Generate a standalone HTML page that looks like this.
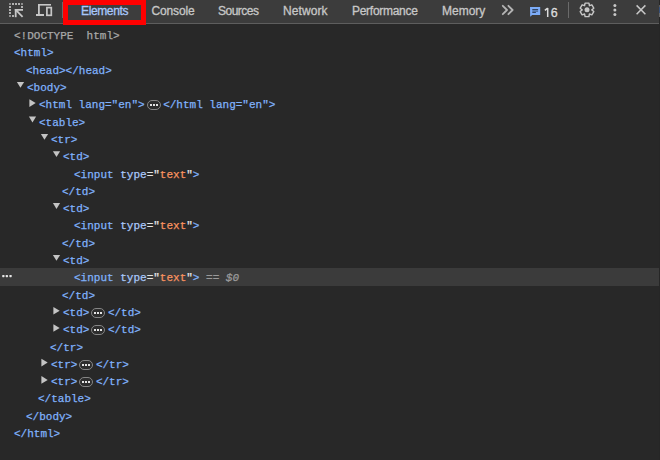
<!DOCTYPE html>
<html><head><meta charset="utf-8">
<style>
*{margin:0;padding:0;box-sizing:border-box}
html,body{width:660px;height:460px;overflow:hidden;background:#282828}
body{position:relative;font-family:"Liberation Sans",sans-serif}
#tb{position:absolute;left:0;top:0;width:659px;height:24px;background:#3c3c3c;border-bottom:1px solid #5e5e5e}
.tab{position:absolute;top:1px;height:23px;line-height:21px;font-size:12px;color:#c7c7c7;white-space:nowrap;-webkit-text-stroke:0.3px currentColor}
.sep{position:absolute;top:2px;width:1px;height:16px;background:#6a6a6a}
#sel{position:absolute;left:63px;top:-0.5px;width:83px;height:25px;border:5px solid #ff0000;background:#3d3d3d}
svg{position:absolute;overflow:visible}
#code{position:absolute;left:0;top:0;font-family:"Liberation Mono",monospace;font-size:11px;color:#e3e3e3;-webkit-text-stroke:0.25px currentColor}
.r{position:absolute;left:0;height:17.3px;line-height:17.3px;white-space:pre}
.t{color:#80b2fc}
.an{color:#a8c7fa}
.av{color:#fa9360}
.q{color:#e3e3e3}
.eq{color:#9a9a9a}
.dt{color:#a8a8a8}
.tri{position:absolute;width:0;height:0}
.dn{border-left:3.6px solid transparent;border-right:3.6px solid transparent;border-top:6px solid #c4c4c4}
.rt{border-top:3.8px solid transparent;border-bottom:3.8px solid transparent;border-left:6px solid #c4c4c4}
.sp{display:inline-block;width:18.5px}

#hl{position:absolute;left:0;top:268px;width:659px;height:18px;background:#3b3b3b}
</style></head><body>
<div id="tb">
</div>
<div id="sel"></div>
<div style="position:absolute;left:659px;top:0;width:1px;height:460px;background:#262626"></div><div style="position:absolute;left:659px;top:5px;width:1px;height:2px;background:#5a5a5a"></div><div style="position:absolute;left:659px;top:7px;width:1px;height:6px;background:#36507a"></div><div style="position:absolute;left:659px;top:13px;width:1px;height:4px;background:#686868"></div>
<div class="tab" style="left:81px;color:#a8c7fa;letter-spacing:-0.37px">Elements</div>
<div class="tab" style="left:151.5px;letter-spacing:-0.15px">Console</div>
<div class="tab" style="left:218px;letter-spacing:-0.5px">Sources</div>
<div class="tab" style="left:283px;letter-spacing:0.1px">Network</div>
<div class="tab" style="left:352px;letter-spacing:-0.28px">Performance</div>
<div class="tab" style="left:442px">Memory</div>
<svg width="660" height="24" style="left:0;top:0" viewBox="0 0 660 24">
<g fill="#c7c7c7">
<g fill="#b0b0b0"><rect x="12" y="3" width="2" height="2"/><rect x="15" y="3" width="2" height="2"/><rect x="18" y="3" width="2" height="2"/>
<rect x="9" y="6" width="2" height="2"/><rect x="9" y="9" width="2" height="2"/><rect x="9" y="12" width="2" height="2"/>
<rect x="21" y="6" width="2" height="2"/><rect x="12" y="15" width="2" height="2"/></g>
<g fill="#8c8c8c"><rect x="9" y="3" width="2" height="2"/><rect x="21" y="3" width="2" height="2"/><rect x="9" y="15" width="2" height="2"/></g>
<rect x="14.8" y="9" width="8.2" height="1.8"/><rect x="14.8" y="9" width="1.8" height="8.2"/>
<rect x="38" y="4" width="13" height="1.6"/><rect x="38" y="4" width="1.8" height="11"/><rect x="36" y="14" width="8" height="2"/>
<circle cx="614.9" cy="5.45" r="1.5"/><circle cx="614.9" cy="10" r="1.5"/><circle cx="614.9" cy="14.55" r="1.5"/>
<circle cx="587" cy="9.85" r="2.5"/>
</g>
<g fill="none" stroke="#c7c7c7">
<path d="M16,10.2 L22.6,16.8" stroke-width="1.8"/>
<rect x="46.9" y="7.6" width="4.4" height="7.7" stroke-width="1.7"/>
<path d="M502.8,5.8 L507,10 L502.8,14.2 M508.4,5.8 L512.6,10 L508.4,14.2" stroke="#b4b4b4" stroke-width="1.8" stroke-linecap="round" stroke-linejoin="round"/>
<path d="M636.6,5.4 L645.4,14.2 M645.4,5.4 L636.6,14.2" stroke-width="1.5"/>
<path d="M584.60,5.69 L585.07,3.12 L588.93,3.12 L589.40,5.69 L589.40,5.69 L591.86,4.81 L593.79,8.16 L591.80,9.85 L591.80,9.85 L593.79,11.54 L591.86,14.89 L589.40,14.01 L589.40,14.01 L588.93,16.58 L585.07,16.58 L584.60,14.01 L584.60,14.01 L582.14,14.89 L580.21,11.54 L582.20,9.85 L582.20,9.85 L580.21,8.16 L582.14,4.81 L584.60,5.69Z" stroke-width="1.4" stroke-linejoin="round"/>
</g>
<path d="M530,7 H540.2 V15.1 H532.2 L530.2,16.8 Z" fill="#7cacf8"/>
<g fill="#2a3a55"><rect x="532.3" y="9" width="5.8" height="0.9"/><rect x="532.3" y="10.6" width="5.8" height="0.9"/><rect x="532.3" y="12.1" width="3.6" height="0.9"/></g>
</svg>
<svg width="10" height="14" style="left:542px;top:5px" viewBox="542 5 10 14"><path d="M547.7,8 V17 M544.9,10.4 L547.7,8.2" stroke="#dcdcdc" stroke-width="1.5" fill="none"/></svg><div class="tab" style="left:550.7px;top:3px;color:#dcdcdc;font-size:12.5px">6</div>
<div class="sep" style="left:62px"></div>
<div class="sep" style="left:568px"></div>
<div id="hl"></div>
<svg width="20" height="10" style="left:0;top:271px" viewBox="0 271 20 10"><g fill="#e6e6e6"><rect x="2.2" y="274.9" width="2.3" height="2.3" rx="0.6"/><rect x="5.7" y="274.9" width="2.3" height="2.3" rx="0.6"/><rect x="9.4" y="274.9" width="2.3" height="2.3" rx="0.6"/></g></svg>
<div id="code">
<div class="r" style="top:28.10px;left:14.00px"><span class="dt">&lt;!DOCTYPE  html&gt;</span></div>
<div class="r" style="top:45.40px;left:14.00px"><span class="t">&lt;html&gt;</span></div>
<div class="r" style="top:62.70px;left:26.00px"><span class="t">&lt;head&gt;&lt;/head&gt;</span></div>
<div class="r" style="top:80.00px;left:27.00px"><span class="t">&lt;body&gt;</span></div>
<div class="r" style="top:97.30px;left:39.00px"><span class="t">&lt;html lang="en"&gt;</span><span class="sp"></span><span class="t">&lt;/html lang="en"&gt;</span></div>
<div class="r" style="top:114.60px;left:39.00px"><span class="t">&lt;table&gt;</span></div>
<div class="r" style="top:131.90px;left:51.00px"><span class="t">&lt;tr&gt;</span></div>
<div class="r" style="top:149.20px;left:63.00px"><span class="t">&lt;td&gt;</span></div>
<div class="r" style="top:166.50px;left:74.00px"><span class="t">&lt;input </span><span class="an">type</span><span class="q">="</span><span class="av">text</span><span class="q">"</span><span class="t">&gt;</span></div>
<div class="r" style="top:183.80px;left:62.00px"><span class="t">&lt;/td&gt;</span></div>
<div class="r" style="top:201.10px;left:63.00px"><span class="t">&lt;td&gt;</span></div>
<div class="r" style="top:218.40px;left:74.00px"><span class="t">&lt;input </span><span class="an">type</span><span class="q">="</span><span class="av">text</span><span class="q">"</span><span class="t">&gt;</span></div>
<div class="r" style="top:235.70px;left:62.00px"><span class="t">&lt;/td&gt;</span></div>
<div class="r" style="top:253.00px;left:63.00px"><span class="t">&lt;td&gt;</span></div>
<div class="r" style="top:270.30px;left:74.00px"><span class="t">&lt;input </span><span class="an">type</span><span class="q">="</span><span class="av">text</span><span class="q">"</span><span class="t">&gt;</span><span class="eq"> == <i>$0</i></span></div>
<div class="r" style="top:287.60px;left:62.00px"><span class="t">&lt;/td&gt;</span></div>
<div class="r" style="top:304.90px;left:63.00px"><span class="t">&lt;td&gt;</span><span class="sp"></span><span class="t">&lt;/td&gt;</span></div>
<div class="r" style="top:322.20px;left:63.00px"><span class="t">&lt;td&gt;</span><span class="sp"></span><span class="t">&lt;/td&gt;</span></div>
<div class="r" style="top:339.50px;left:50.00px"><span class="t">&lt;/tr&gt;</span></div>
<div class="r" style="top:356.80px;left:51.00px"><span class="t">&lt;tr&gt;</span><span class="sp"></span><span class="t">&lt;/tr&gt;</span></div>
<div class="r" style="top:374.10px;left:51.00px"><span class="t">&lt;tr&gt;</span><span class="sp"></span><span class="t">&lt;/tr&gt;</span></div>
<div class="r" style="top:391.40px;left:38.00px"><span class="t">&lt;/table&gt;</span></div>
<div class="r" style="top:408.70px;left:26.00px"><span class="t">&lt;/body&gt;</span></div>
<div class="r" style="top:426.00px;left:14.00px"><span class="t">&lt;/html&gt;</span></div>
<svg width="660" height="460" style="left:0;top:0" viewBox="0 0 660 460"><g fill="#c4c4c4"><polygon points="16.90,82.00 24.10,82.00 20.50,87.80"/><rect x="147.50" y="100.50" width="13.00" height="9.00" rx="4.50" fill="#2d2d2d" stroke="#858585" stroke-width="1"/><rect x="150.00" y="104.00" width="2" height="2" fill="#e3e3e3"/><rect x="153.00" y="104.00" width="2" height="2" fill="#e3e3e3"/><rect x="156.00" y="104.00" width="2" height="2" fill="#e3e3e3"/><polygon points="29.40,99.30 35.70,103.10 29.40,106.90"/><polygon points="28.90,116.60 36.10,116.60 32.50,122.40"/><polygon points="40.90,133.90 48.10,133.90 44.50,139.70"/><polygon points="52.90,151.20 60.10,151.20 56.50,157.00"/><polygon points="52.90,203.10 60.10,203.10 56.50,208.90"/><polygon points="52.90,255.00 60.10,255.00 56.50,260.80"/><rect x="91.50" y="308.50" width="13.00" height="9.00" rx="4.50" fill="#2d2d2d" stroke="#858585" stroke-width="1"/><rect x="94.00" y="312.00" width="2" height="2" fill="#e3e3e3"/><rect x="97.00" y="312.00" width="2" height="2" fill="#e3e3e3"/><rect x="100.00" y="312.00" width="2" height="2" fill="#e3e3e3"/><polygon points="53.40,306.90 59.70,310.70 53.40,314.50"/><rect x="91.50" y="325.50" width="13.00" height="9.00" rx="4.50" fill="#2d2d2d" stroke="#858585" stroke-width="1"/><rect x="94.00" y="329.00" width="2" height="2" fill="#e3e3e3"/><rect x="97.00" y="329.00" width="2" height="2" fill="#e3e3e3"/><rect x="100.00" y="329.00" width="2" height="2" fill="#e3e3e3"/><polygon points="53.40,324.20 59.70,328.00 53.40,331.80"/><rect x="79.50" y="360.50" width="13.00" height="9.00" rx="4.50" fill="#2d2d2d" stroke="#858585" stroke-width="1"/><rect x="82.00" y="364.00" width="2" height="2" fill="#e3e3e3"/><rect x="85.00" y="364.00" width="2" height="2" fill="#e3e3e3"/><rect x="88.00" y="364.00" width="2" height="2" fill="#e3e3e3"/><polygon points="41.40,358.80 47.70,362.60 41.40,366.40"/><rect x="79.50" y="377.50" width="13.00" height="9.00" rx="4.50" fill="#2d2d2d" stroke="#858585" stroke-width="1"/><rect x="82.00" y="381.00" width="2" height="2" fill="#e3e3e3"/><rect x="85.00" y="381.00" width="2" height="2" fill="#e3e3e3"/><rect x="88.00" y="381.00" width="2" height="2" fill="#e3e3e3"/><polygon points="41.40,376.10 47.70,379.90 41.40,383.70"/></g></svg>
</div>
</body></html>
